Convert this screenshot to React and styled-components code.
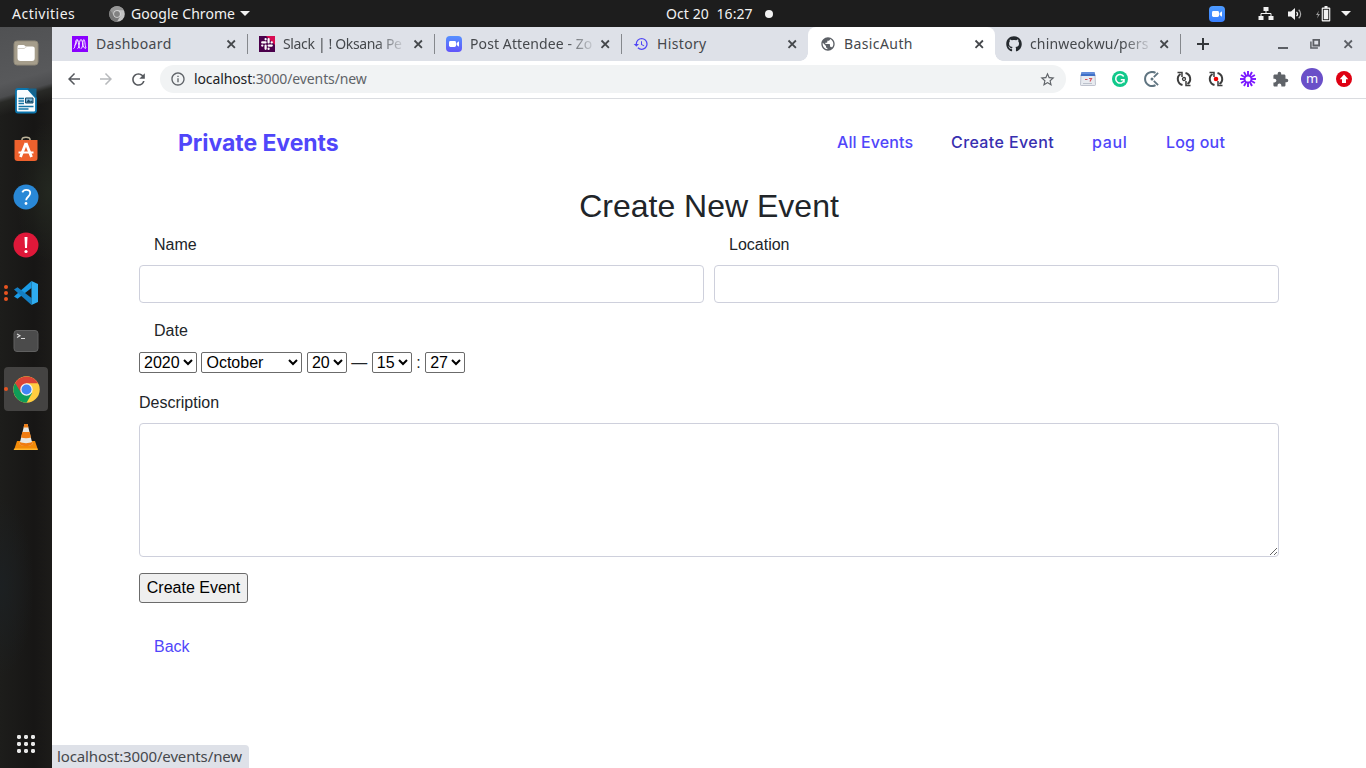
import React from "react";
import styled, { createGlobalStyle } from "styled-components";
import {
  MdArrowBack, MdArrowForward, MdRefresh, MdInfoOutline, MdStarBorder,
  MdExtension, MdHistory, MdPublic,
} from "react-icons/md";
import { FaGithub } from "react-icons/fa";

const uiFont = '"Noto Sans", "Open Sans", sans-serif';

const GlobalStyle = createGlobalStyle`
  *, *::before, *::after { box-sizing: border-box; }
  body { margin: 0; overflow: hidden; font-family: "Liberation Sans", Arial, sans-serif; }
  svg { display: block; flex: none; }
`;

const Desktop = styled.div`
  width: 1366px;
  height: 768px;
  display: grid;
  grid-template: 27px 741px / 52px 1314px;
  background: #fff;
`;

/* ---------- system bar ---------- */
const SystemBar = styled.header`
  grid-column: 1 / 3;
  display: grid;
  grid-template-columns: 666px 108px 1fr;
  align-items: center;
  background: #1d1d1d;
  color: #f2f2f2;
  font: 14px/27px ${uiFont};
  white-space: pre;
`;
const BarGroup = styled.div`
  display: flex;
  align-items: center;
`;
const BarLeft = styled(BarGroup)`
  padding-left: 12px;
`;
const BarRight = styled(BarGroup)`
  justify-content: flex-end;
  padding-right: 15px;
`;
const Label = styled.span`
  letter-spacing: ${(p) => p.$track || 0}px;
  width: ${(p) => (p.$width ? `${p.$width}px` : "auto")};
  flex: none;
`;
const AppMenu = styled(BarGroup)`
  margin-left: 34px;
  gap: 6px;
`;
const Clock = styled(BarGroup)`
  gap: 12px;
`;
const Dot = styled.i`
  width: 8px;
  height: 8px;
  border-radius: 50%;
  background: #f2f2f2;
`;
const Caret = styled.i`
  border: 5px solid transparent;
  border-top-color: #f2f2f2;
  border-bottom: 0;
  margin-left: ${(p) => p.$shift || 0}px;
`;

/* ---------- dock ---------- */
const Dock = styled.nav`
  display: flex;
  flex-direction: column;
  padding: 4px 4px 0;
  background:
    linear-gradient(164deg, #505153 0, #58595b 55px, #4c4d4f 68px, #292a27 73px, transparent 86px),
    radial-gradient(ellipse 35px 70px at 50px 165px, #232720, transparent),
    radial-gradient(ellipse 34px 90px at 0 560px, #1c2022, transparent),
    linear-gradient(90deg, #1d1d1b, #171615 65%, #1c1b19);
`;
const DockItem = styled.div`
  position: relative;
  height: 44px;
  margin-bottom: 4px;
  border-radius: 4px;
  display: grid;
  place-items: center;
  background: ${(p) => (p.$active ? "#444342" : "transparent")};
`;
const Running = styled.span`
  position: absolute;
  left: 0;
  top: 50%;
  transform: translateY(-50%);
  display: grid;
  gap: 2px;
  i { width: 4px; height: 4px; border-radius: 50%; background: #e95420; }
`;
const AppsItem = styled(DockItem)`
  margin-top: auto;
  margin-bottom: 2px;
`;

/* ---------- browser ---------- */
const Browser = styled.main`
  display: flex;
  flex-direction: column;
  position: relative;
  background: #fff;
`;
const TabStrip = styled.div`
  height: 34px;
  display: flex;
  padding-left: 8px;
  background: #dee1e8;
`;
const Tab = styled.div`
  position: relative;
  width: ${(p) => p.$width || 187}px;
  height: 34px;
  padding: 0 9px 0 ${(p) => p.$inset || 12}px;
  display: flex;
  align-items: center;
  border-radius: ${(p) => (p.$active ? "8px 8px 0 0" : 0)};
  background: ${(p) => (p.$active ? "#fff" : "transparent")};
  color: #45484c;
  &::after {
    content: "";
    display: ${(p) => (p.$divider ? "block" : "none")};
    position: absolute;
    right: -1px;
    top: 7px;
    width: 1px;
    height: 20px;
    background: #85888d;
  }
`;
const TabFoot = styled.i`
  position: absolute;
  bottom: 0;
  ${(p) => p.$side}: -8px;
  width: 8px;
  height: 8px;
  background: radial-gradient(circle at ${(p) => (p.$side === "left" ? "0 0" : "100% 0")}, transparent 7.5px, #fff 8px);
`;
const TabTitle = styled.span`
  flex: none;
  margin-left: 8px;
  margin-right: auto;
  white-space: nowrap;
  font: 14px/20px ${uiFont};
  letter-spacing: ${(p) => p.$track || 0}px;
  mask-image: ${(p) => (p.$fade ? "linear-gradient(90deg, #000 calc(100% - 26px), rgba(0,0,0,.15))" : "none")};
`;
const NewTab = styled.div`
  width: 46px;
  display: grid;
  place-items: center;
`;
const WindowButtons = styled.div`
  margin-left: auto;
  padding-right: 11px;
  display: flex;
  align-items: center;
  gap: 20px;
`;
const Toolbar = styled.div`
  height: 38px;
  padding: 0 0 1px 13px;
  display: flex;
  align-items: center;
  border-bottom: 1px solid #dadce0;
`;
const NavButtons = styled.div`
  display: flex;
  flex: none;
  gap: 14px;
  width: 95px;
  color: #55585d;
`;
const Omnibox = styled.div`
  flex: none;
  width: 906px;
  height: 28px;
  padding: 0 10px;
  border-radius: 14px;
  display: flex;
  align-items: center;
  background: #f1f3f4;
  color: #5f6368;
`;
const Url = styled.span`
  flex: 1;
  margin-left: 8px;
  font: 14px/28px ${uiFont};
  letter-spacing: ${(p) => p.$track || 0}px;
  b { font-weight: 400; color: #202124; }
`;
const Extensions = styled.div`
  margin-left: 6px;
  flex: none;
  display: flex;
  align-items: center;
`;
const Slot = styled.div`
  width: 32px;
  display: grid;
  place-items: center;
  margin-left: ${(p) => p.$shift || 0}px;
`;
const Avatar = styled.div`
  width: 22px;
  height: 22px;
  border-radius: 50%;
  background: #6a4fc8;
  color: #fff;
  text-align: center;
  font: 13px/20px ${uiFont};
`;
const StatusBubble = styled.div`
  position: absolute;
  left: 0;
  bottom: 0;
  width: 197px;
  height: 23px;
  padding-left: 5px;
  border-top-right-radius: 4px;
  background: #dee1e8;
  color: #45484c;
  font: 15px/23px ${uiFont};
  letter-spacing: ${(p) => p.$track || 0}px;
  white-space: nowrap;
`;

/* ---------- page ---------- */
const Page = styled.section`
  width: 1140px;
  margin: 0 auto;
  color: #212529;
  font-size: 16px;
  line-height: 24px;
`;
const Navbar = styled.div`
  height: 88px;
  padding: 0 54px 0 39px;
  display: flex;
  justify-content: space-between;
  align-items: center;
  font-family: Inter, sans-serif;
`;
const Brand = styled.a`
  color: #5046fa;
  font-size: 23px;
  font-weight: 700;
  letter-spacing: ${(p) => p.$track}px;
`;
const NavLinks = styled.div`
  display: flex;
  padding-bottom: 2px;
`;
const NavLink = styled.a`
  width: ${(p) => p.$width}px;
  color: ${(p) => (p.$current ? "#372fb0" : "#5046fa")};
  font-size: 16px;
  font-weight: 500;
  letter-spacing: ${(p) => p.$track}px;
  white-space: nowrap;
`;
const Title = styled.h2`
  margin: 0 0 8px;
  font-size: 32px;
  font-weight: 400;
  line-height: 38px;
  text-align: center;
`;
const Columns = styled.div`
  display: grid;
  grid-template-columns: 1fr 1fr;
  gap: 10px;
`;
const Field = styled.div`
  margin-bottom: 16px;
`;
const FieldLabel = styled.label`
  display: block;
  margin-bottom: 8px;
  padding-left: ${(p) => (p.$flush ? 0 : 15)}px;
`;
const Input = styled.input`
  display: block;
  width: 100%;
  height: 38px;
  border: 1px solid #ced0dc;
  border-radius: 4px;
`;
const DateLine = styled.div`
  height: 24px;
  white-space: nowrap;
`;
const Select = styled.select`
  width: ${(p) => p.$width}px;
  height: 21px;
  margin: 0;
  padding: 0;
  border: 1px solid #6b6b6b;
  border-radius: 2px;
  background-color: #fff;
  color: #000;
  font: 16px "Liberation Sans", Arial, sans-serif;
`;
const TextArea = styled.textarea`
  display: block;
  width: 100%;
  height: 134px;
  border: 1px solid #ced0dc;
  border-radius: 4px;
  resize: vertical;
`;
const Submit = styled.button`
  display: block;
  width: 109px;
  height: 30px;
  padding: 0;
  border: 1px solid #6b6b6b;
  border-radius: 3px;
  background: #efefef;
  color: #000;
  font: 16px "Liberation Sans", Arial, sans-serif;
`;
const BackLink = styled.a`
  display: inline-block;
  margin: 32px 0 0 15px;
  color: #5046fa;
`;

/* ---------- drawings ---------- */
const Chrome = ({ size = 26, mono }) => {
  const [r, g, y, b] = mono ? ["#969696", "#777", "#c4c4c4", "#828282"] : ["#db4437", "#0f9d58", "#ffcd40", "#4285f4"];
  return (
    <svg width={size} height={size} viewBox="0 0 48 48">
      <circle cx="24" cy="24" r="23.500" fill={y} />
      <path d="M24 24 3.700 12.300A23.500 23.500 0 0 0 24 47.500l10-17.500Z" fill={g} />
      <path d="M3.700 12.300A23.500 23.500 0 0 1 44.600 13H24L14 29.500Z" fill={r} />
      <circle cx="24" cy="24" r="11" fill={mono ? "#ddd" : "#f4f4f4"} />
      <circle cx="24" cy="24" r="8.800" fill={b} />
    </svg>
  );
};
const CloseIcon = ({ color = "#45484c" }) => (
  <svg width="14" height="14" viewBox="0 0 14 14"><path d="m3.500 3.500 7.400 7.400m0-7.400-7.400 7.400" stroke={color} strokeWidth="1.800" /></svg>
);
const PlusIcon = () => (
  <svg width="14" height="14" viewBox="0 0 14 14"><path d="M7 1v12M1 7h12" stroke="#34373b" strokeWidth="2" /></svg>
);
const ZoomIcon = ({ top = "#5590ff", bottom = "#6254fa" }) => (
  <svg width="16" height="16" viewBox="0 0 16 16">
    <defs><linearGradient id={`z${top.slice(1)}`} x2="0" y2="1"><stop stopColor={top} /><stop offset="1" stopColor={bottom} /></linearGradient></defs>
    <rect width="16" height="16" rx="4" fill={`url(#z${top.slice(1)})`} />
    <rect x="3" y="5" width="7" height="6" rx="1.4" fill="#fff" />
    <path d="m10.6 7 2.4-1.700v5.400L10.600 9Z" fill="#fff" />
  </svg>
);
const MicroverseIcon = () => (
  <svg width="16" height="16" viewBox="0 0 16 16" fill="none" stroke="#fff">
    <path d="M0 0h16v16H0Z" fill="#8a00ff" stroke="none" />
    <path d="M1.500 12.500C3.600 12.500 3 3.500 5 3.500s1.300 9 3.300 9M5.500 12.500c2.200 0 1.500-9 3.500-9s1.200 9 4.800 9M2.500 9.500c2.500-1 2-6 3.500-5.500M9 12.500c2.200 0 1.500-9 2.800-9s1 6 2.200 8.500" strokeWidth=".9" />
  </svg>
);
const SlackIcon = () => (
  <svg width="16" height="16" viewBox="0 0 16 16">
    <path d="M0 0h16v16H0Z" fill="#4a004b" />
    <path d="M7 0h9v9Z" fill="#d80c52" />
    <path d="M6.600 3v.300M6.600 6.400H3.200M9.600 3.200v3.200M12.800 6.400h-.200M3.200 9.600h.200M6.600 9.600v3.200M9.600 9.600h3.200M9.600 12.700v.200" stroke="#fff" strokeWidth="2.200" strokeLinecap="round" />
  </svg>
);
const Minimise = () => <svg width="12" height="14" viewBox="0 0 12 14"><path d="M1 11h10" stroke="#5c5f65" strokeWidth="2" /></svg>;
const Restore = () => (
  <svg width="12" height="12" viewBox="0 0 12 12" fill="none" stroke="#5c5f65" strokeWidth="1.800">
    <path d="M4.400 1.900h5.700v5.600H4.400Z" />
    <path d="M1.900 3.500v6.600h7" strokeWidth="1.500" />
  </svg>
);
const FilesIcon = () => (
  <svg width="26" height="26" viewBox="0 0 26 26">
    <rect x="1" y="1" width="24" height="24" rx="3" fill="#a59d8b" stroke="#8f8878" />
    <path d="M4.500 7c0-1.500.6-2 2-2h4c1.300 0 1.500 1.500 2.500 1.500h6.500c1.500 0 2.200.7 2.200 2V18c0 2-.8 3-2.700 3H7.500c-2 0-3-1-3-3Z" fill="#fff" />
    <path d="M5 8.500h6c1 0 1.500-1.600 2.500-1.600" fill="none" stroke="#d4d0c8" />
  </svg>
);
const WriterIcon = () => (
  <svg width="26" height="28" viewBox="0 0 26 28">
    <path d="M5 2h10l8 9v12.500c0 1.500-.5 2-2 2H5c-1.500 0-2-.5-2-2V4c0-1.500.500-2 2-2Z" fill="#fafdff" stroke="#0b75ad" strokeWidth="1.800" />
    <path d="M14 1.500h9.500V11Z" fill="#15648d" />
    <path d="M5.500 11.500H11M5.500 14H11M5.500 16.500H11M5.500 19.500h15M5.500 22h10" stroke="#1575a5" strokeWidth="1.300" />
    <path d="M12.500 11h7.500v5h-7.500Z" fill="#7eb5d7" stroke="#174c69" />
    <path d="m13 15.500 2.500-3 2 2 1.500-1 1 2Z" fill="#174c69" />
  </svg>
);
const SoftwareIcon = () => (
  <svg width="26" height="28" viewBox="0 0 26 28">
    <path d="M9 7V4.500C9 1.500 17 1.500 17 4.500V7" fill="none" stroke="#bdb49b" strokeWidth="1.500" />
    <path d="M1.500 5h23v18c0 2-.7 3-3 3h-17c-2 0-3-1-3-3Z" fill="#ee612d" />
    <path d="M13 8 7.500 22M13 8l5.500 14" stroke="#fff" strokeWidth="2.800" fill="none" />
    <path d="M5.500 17.500h15" stroke="#fff" strokeWidth="2" />
  </svg>
);
const HelpIcon = () => (
  <svg width="26" height="26" viewBox="0 0 26 26">
    <circle cx="13" cy="13" r="12.500" fill="#2988d6" />
    <path d="M9.300 8.300c.8-1.700 2-2.500 3.800-2.500 2.500 0 4.100 1.300 4.100 3.300 0 3.600-4.100 3.600-4.100 7.200" fill="none" stroke="#fff" strokeWidth="1.800" />
    <circle cx="13" cy="19.500" r="1.400" fill="#fff" />
  </svg>
);
const AlertIcon = () => (
  <svg width="26" height="26" viewBox="0 0 26 26">
    <circle cx="13" cy="13" r="12.500" fill="#df1839" />
    <path d="M11.500 5h3L14 16h-2Z" fill="#fff" /><circle cx="13" cy="19.500" r="1.600" fill="#fff" />
  </svg>
);
const CodeIcon = () => (
  <svg width="26" height="26" viewBox="0 0 26 26">
    <path d="M18.500 1v7L4.500 18.700 1 16.500Z" fill="#1a9be6" />
    <path d="M18.500 25v-7L4.500 7.300 1 9.500Z" fill="#147fc4" />
    <path d="m18.500 1 6.500 3v18l-6.500 3Z" fill="#2eacf0" />
  </svg>
);
const TerminalIcon = () => (
  <svg width="26" height="24" viewBox="0 0 26 24">
    <rect x="1" y="1.500" width="24" height="21" rx="3" fill="#4b4b4b" stroke="#606060" />
    <path d="m4 5 3 1.700-3 1.700M8 9.500h4" stroke="#ddd" strokeWidth="1.100" fill="none" />
  </svg>
);
const VlcIcon = () => (
  <svg width="26" height="28" viewBox="0 0 26 28">
    <path d="M4 18h18l3 9H1Z" fill="#f28a08" />
    <path d="M1.500 25.500h23V27h-24Z" fill="#ffb52d" />
    <path d="M11.500 1h3l5 20c-2 2.500-11 2.500-13 0Z" fill="#e8e7e2" />
    <path d="M11.500 1h3l1 3.500h-5ZM9.300 9h7.400l1.300 5.500c-3 1-7 1-10 0ZM7 19c3 1.500 9 1.500 12 0l.5 2c-3 3-10 3-13 0Z" fill="#f07c11" />
  </svg>
);
const GridIcon = () => (
  <svg width="18" height="18" viewBox="0 0 18 18" fill="#e8e8e8">
    {[2, 9, 16].map((y) => [2, 9, 16].map((x) => <rect key={`${x}-${y}`} x={x - 2} y={y - 2} width="4" height="4" rx="1.400" />))}
  </svg>
);
const NetworkIcon = () => (
  <svg width="16" height="15" viewBox="0 0 16 15" fill="#f2f2f2">
    <path d="M5.500 1h5v4h-5ZM.5 10h5v4h-5ZM10.500 10h5v4h-5Z" />
    <path d="M8 5v2.500M3 10V7.500h10V10" fill="none" stroke="#f2f2f2" />
  </svg>
);
const VolumeIcon = () => (
  <svg width="16" height="14" viewBox="0 0 16 14" fill="none" stroke="#f2f2f2">
    <path d="M1 4.500h3L8 1v12L4 9.500H1Z" fill="#f2f2f2" stroke="none" />
    <path d="M9.500 4.800c1.300 1.300 1.300 3.100 0 4.400" strokeWidth="1.200" />
    <path d="M11.700 2.700c2.600 2.500 2.600 6.100 0 8.600" stroke="#aaa" strokeWidth="1.200" />
  </svg>
);
const BatteryIcon = () => (
  <svg width="16" height="16" viewBox="0 0 16 16">
    <path d="M4 4.500 1 9h2l-1 3.500L5 8H3Z" fill="#999" />
    <path d="M9.500 0h3v2h-3Z" fill="#f2f2f2" />
    <rect x="6.700" y="1.500" width="8.600" height="14" rx="1" fill="#f2f2f2" />
    <rect x="8.300" y="3.300" width="5.400" height="10.400" fill="none" stroke="#1d1d1d" strokeWidth=".9" />
  </svg>
);
const CalendarIcon = () => (
  <svg width="16" height="14" viewBox="0 0 16 14">
    <path d="M1 2.500h14l.5 10c0 1-.5 1-1 1h-13c-.700 0-1 0-1-1Z" fill="#e8ebf0" stroke="#a7aebc" strokeWidth=".7" />
    <path d="M1.500 0h13l.8 4H.7Z" fill="#3f70c7" />
    <path d="M2 1h12" stroke="#89abef" />
    <path d="M5 7.500h2.500M9 6.500h2.500L10 9.500" fill="none" stroke="#d65560" strokeWidth="1.200" />
    <path d="M3 11.500h9" stroke="#bcc2cc" />
  </svg>
);
const GrammarlyIcon = () => (
  <svg width="16" height="16" viewBox="0 0 16 16">
    <circle cx="8" cy="8" r="8" fill="#11c98b" />
    <path d="M11.700 5.500A4.300 4.300 0 1 0 12 9.500M8.800 8.700H12v2.700" fill="none" stroke="#fff" strokeWidth="1.500" />
  </svg>
);
const ClockifyIcon = () => (
  <svg width="16" height="16" viewBox="0 0 16 16" fill="none" stroke="#5f7480">
    <path d="M11.500 1.900A7 7 0 1 0 11.500 14.100" strokeWidth="2" />
    <path d="m9.800 6.200 4.300-4.300M9.800 9.800l4.300 4.300" strokeWidth="1.800" /><circle cx="8" cy="8" r="1.500" fill="#5f7480" stroke="none" />
  </svg>
);
const LoopIcon = ({ dot }) => (
  <svg width="16" height="16" viewBox="0 0 16 16" fill="none" stroke="#3d3d3d" strokeWidth="2">
    <path d="M6.500 14A6.100 6.100 0 0 1 4.500 3M9.500 2a6.100 6.100 0 0 1 2 11" />
    <path d="M1.500 1.500H6V6M14.500 14.500H10V10" strokeWidth="1.500" />
    <circle cx="8" cy="8" r={dot ? 2.300 : 1.500} fill={dot ? "#e00" : "none"} stroke={dot ? "#e00" : "#3d3d3d"} strokeWidth={dot ? 0 : 1.300} />
  </svg>
);
const LoomIcon = () => (
  <svg width="16" height="16" viewBox="0 0 16 16" stroke="#7a18ff" strokeWidth="1.900">
    {Array.from({ length: 12 }, (_, i) => <path key={i} d="M8 0v5" transform={`rotate(${i * 30} 8 8)`} />)}
    <circle cx="8" cy="8" r="3.400" fill="#fff" strokeWidth="1.700" />
  </svg>
);
const UpdateIcon = () => (
  <svg width="16" height="16" viewBox="0 0 16 16">
    <circle cx="8" cy="8" r="8" fill="#df0012" /><path d="m8 3.500 4.300 4.700H10V12H6V8.200H3.700Z" fill="#fff" />
  </svg>
);

const dockItems = [
  { icon: <FilesIcon /> }, { icon: <WriterIcon /> }, { icon: <SoftwareIcon /> },
  { icon: <HelpIcon /> }, { icon: <AlertIcon /> }, { icon: <CodeIcon />, running: 3 },
  { icon: <TerminalIcon /> }, { icon: <Chrome size={27} />, running: 1, active: true }, { icon: <VlcIcon /> },
];

const tabs = [
  { title: "Dashboard", icon: <MicroverseIcon />, divider: true, track: 0.35 },
  { title: "Slack | ! Oksana Pe", icon: <SlackIcon />, divider: true, fade: true, track: -0.35 },
  { title: "Post Attendee - Zo", icon: <ZoomIcon />, divider: true, fade: true, track: 0.1 },
  { title: "History", icon: <MdHistory size={16} color="#5046f5" />, track: 0.35 },
  { title: "BasicAuth", icon: <MdPublic size={16} color="#5c6066" />, active: true, track: 0.4 },
  { title: "chinweokwu/pers", icon: <FaGithub size={16} color="#24292e" />, divider: true, fade: true, width: 185, inset: 11, track: 0.15 },
];

const extensions = [
  <CalendarIcon />, <GrammarlyIcon />, <ClockifyIcon />, <LoopIcon />, <LoopIcon dot />,
  <LoomIcon />, <MdExtension size={17} color="#5f6368" />, <Avatar>m</Avatar>, <UpdateIcon />,
];

const Picker = ({ value, width }) => (
  <Select $width={width} defaultValue={value}><option>{value}</option></Select>
);

export default function App() {
  return (
    <Desktop>
      <GlobalStyle />
      <SystemBar>
        <BarLeft>
          <Label $width={63} $track={0.5}>Activities</Label>
          <AppMenu>
            <Chrome size={16} mono />
            <Label $width={103} $track={0.05}>Google Chrome</Label>
            <Caret />
          </AppMenu>
        </BarLeft>
        <Clock><Label $width={87} $track={0.1}>Oct 20  16:27</Label><Dot /></Clock>
        <BarRight>
          <ZoomIcon top="#4d9bff" bottom="#387fff" />
          <Slot $shift={25}><NetworkIcon /></Slot>
          <Slot $shift={-3}><VolumeIcon /></Slot>
          <Slot $shift={-4}><BatteryIcon /></Slot>
          <Caret $shift={2} />
        </BarRight>
      </SystemBar>

      <Dock>
        {dockItems.map(({ icon, running, active }, i) => (
          <DockItem key={i} $active={active}>
            {running && <Running>{Array.from({ length: running }, (_, n) => <i key={n} />)}</Running>}
            {icon}
          </DockItem>
        ))}
        <AppsItem><GridIcon /></AppsItem>
      </Dock>

      <Browser>
        <TabStrip>
          {tabs.map((t) => (
            <Tab key={t.title} $active={t.active} $divider={t.divider} $width={t.width} $inset={t.inset}>
              {t.active && <><TabFoot $side="left" /><TabFoot $side="right" /></>}
              {t.icon}
              <TabTitle $fade={t.fade} $track={t.track}>{t.title}</TabTitle>
              <CloseIcon />
            </Tab>
          ))}
          <NewTab><PlusIcon /></NewTab>
          <WindowButtons><Minimise /><Restore /><CloseIcon color="#5c5f65" /></WindowButtons>
        </TabStrip>
        <Toolbar>
          <NavButtons>
            <MdArrowBack size={18} />
            <MdArrowForward size={18} color="#b7b9bc" />
            <MdRefresh size={19} />
          </NavButtons>
          <Omnibox>
            <MdInfoOutline size={16} />
            <Url $track={-0.12}><b>localhost</b>:3000/events/new</Url>
            <MdStarBorder size={17} />
          </Omnibox>
          <Extensions>{extensions.map((e, i) => <Slot key={i}>{e}</Slot>)}</Extensions>
        </Toolbar>

        <Page>
          <Navbar>
            <Brand $track={-0.06}>Private Events</Brand>
            <NavLinks>
              <NavLink $width={114} $track={0.1}>All Events</NavLink>
              <NavLink $width={141} $track={0.4} $current>Create Event</NavLink>
              <NavLink $width={74} $track={0.7}>paul</NavLink>
              <NavLink $width={59} $track={0.2}>Log out</NavLink>
            </NavLinks>
          </Navbar>
          <Title>Create New Event</Title>
          <Columns>
            <Field><FieldLabel>Name</FieldLabel><Input /></Field>
            <Field><FieldLabel>Location</FieldLabel><Input /></Field>
          </Columns>
          <Field>
            <FieldLabel>Date</FieldLabel>
            <DateLine>
              <Picker value="2020" width={58} />{" "}
              <Picker value="October" width={101} />{" "}
              <Picker value="20" width={40} />{" — "}
              <Picker value="15" width={40} />{" : "}
              <Picker value="27" width={40} />
            </DateLine>
          </Field>
          <Field><FieldLabel $flush>Description</FieldLabel><TextArea /></Field>
          <Submit>Create Event</Submit>
          <BackLink>Back</BackLink>
        </Page>
        <StatusBubble $track={-0.13}>localhost:3000/events/new</StatusBubble>
      </Browser>
    </Desktop>
  );
}
